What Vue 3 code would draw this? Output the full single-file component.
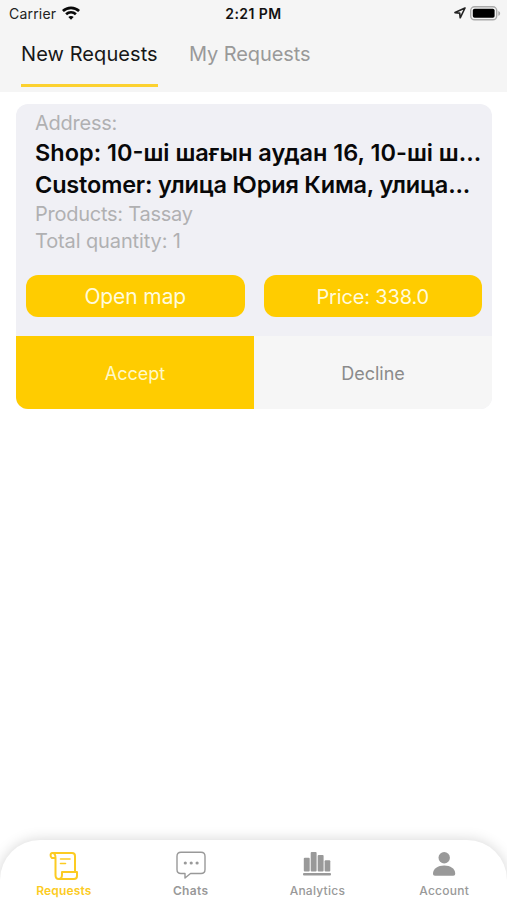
<script setup>
import { ref } from 'vue'

const activeTab = ref('new')
const activeNav = ref('requests')
</script>

<template>
  <div class="screen">
    <header class="top">
      <div class="status">
        <div class="carrier">
          <span>Carrier</span>
          <svg width="18" height="14" viewBox="0 0 18 14" fill="none" stroke="#080808" stroke-width="2.7">
            <path d="M.9 5C5.4.7 12.6.7 17.1 5" />
            <path d="M4.1 8.2c2.8-2.6 7-2.6 9.8 0" />
            <path d="M9 13.7 6.3 10.9c1.5-1.3 3.9-1.3 5.4 0Z" fill="#080808" stroke="none" />
          </svg>
        </div>
        <div class="time">2:21 PM</div>
        <div class="indicators">
          <svg width="12" height="12" viewBox="0 0 12 12" fill="none" stroke="#222" stroke-width="1.6" stroke-linejoin="round">
            <path d="M11 1 1 5.6l4.7.5.5 4.7Z" />
          </svg>
          <svg width="31" height="15" viewBox="0 0 31 15">
            <rect x=".7" y=".8" width="26" height="13" rx="3.8" fill="#f5f5f5" stroke="#aaa" stroke-width="1.4" />
            <rect x="2.8" y="2.8" width="21.8" height="9" rx="1.8" fill="#000" />
            <path d="M28.3 5v4.8c1.1-.4 1.8-1.3 1.8-2.4S29.4 5.4 28.3 5Z" fill="#aaa" />
          </svg>
        </div>
      </div>
      <nav class="tabs">
        <button class="tab tab-new" :class="{ active: activeTab === 'new' }" @click="activeTab = 'new'"><span>New Requests</span></button>
        <button class="tab tab-mine" :class="{ active: activeTab === 'mine' }" @click="activeTab = 'mine'"><span>My Requests</span></button>
      </nav>
    </header>

    <main>
      <article class="card">
        <div class="details">
          <p class="muted address">Address:</p>
          <p class="strong shop">Shop: 10-ші шағын аудан 16, 10-ші ш...</p>
          <p class="strong customer">Customer: улица Юрия Кима, улица...</p>
          <p class="muted">Products: Tassay</p>
          <p class="muted total">Total quantity: 1</p>
        </div>
        <div class="pills">
          <button class="pill map">Open map</button>
          <button class="pill price">Price: 338.0</button>
        </div>
        <div class="actions">
          <button class="accept">Accept</button>
          <button class="decline">Decline</button>
        </div>
      </article>
    </main>

    <nav class="bottom">
      <button class="item requests" :class="{ active: activeNav === 'requests' }" @click="activeNav = 'requests'">
        <svg width="30" height="30" viewBox="0 0 30 30" fill="none" stroke="currentColor" stroke-width="2" stroke-linejoin="round" stroke-linecap="round">
          <path d="M3.500 2H23c2 0 3 1 3 3v15" />
          <path d="M6.500 7H3c-2-1-2-5 .5-5s3 2 3 5v17c0 2.500 1 4 3.200 4s3.300-1.500 3.300-4v-3h15v4c0 2-1 3-3 3H9.500" />
          <path d="M11.500 8h9.500M11.500 12.500h5" stroke-width="1.600" />
        </svg>
        <span>Requests</span>
      </button>
      <button class="item" :class="{ active: activeNav === 'chats' }" @click="activeNav = 'chats'">
        <svg width="30" height="30" viewBox="0 0 30 30" fill="none" stroke="currentColor" stroke-width="1.400" stroke-linejoin="round">
          <path d="M5 1.200h20c2.500 0 4 1.500 4 4v13.300c0 2.500-1.500 4-4 4H14.500L9 27v-4.500H5c-2.500 0-4-1.500-4-4V5.200c0-2.500 1.500-4 4-4Z" />
          <g fill="currentColor" stroke="none"><circle cx="9.300" cy="12" r="1.600" /><circle cx="15.200" cy="12" r="1.600" /><circle cx="21.100" cy="12" r="1.600" /></g>
        </svg>
        <span>Chats</span>
      </button>
      <button class="item analytics" :class="{ active: activeNav === 'analytics' }" @click="activeNav = 'analytics'">
        <svg width="30" height="30" viewBox="0 0 30 30" fill="currentColor">
          <rect x="1.800" y="6.800" width="5.900" height="13.700" rx="1" />
          <rect x="8.700" y="1" width="5.900" height="19.500" rx="1" />
          <rect x="15.700" y="4" width="5.900" height="16.500" rx="1" />
          <rect x="22.600" y="9.200" width="5.700" height="11.300" rx="1" />
          <rect x="1" y="22" width="28" height="2.500" rx="1" />
        </svg>
        <span>Analytics</span>
      </button>
      <button class="item account" :class="{ active: activeNav === 'account' }" @click="activeNav = 'account'">
        <svg width="30" height="30" viewBox="0 0 30 30" fill="currentColor">
          <circle cx="15.200" cy="6.800" r="5.700" />
          <path d="M4 22.500c0-5 5-8 11.200-8s11 3 11 8c0 1.500-.7 2.200-2 2.200H6c-1.300 0-2-.7-2-2.200Z" />
        </svg>
        <span>Account</span>
      </button>
    </nav>
  </div>
</template>

<style>
body { background: #fff; }
</style>

<style scoped>
* { box-sizing: border-box; }
button { border: 0; padding: 0; background: none; font: inherit; color: inherit; }
p { margin: 0; }
.screen { width: 507px; height: 900px; display: flex; flex-direction: column; overflow: hidden; background: #fff; font-family: Inter, "Noto Sans", sans-serif; }
.top { height: 92px; background: #f5f5f5; }
.status { height: 28px; display: grid; grid-template-columns: 1fr auto 1fr; align-items: center; padding: 0 6px 1px 9px; font-size: 14px; color: #222; }
.carrier { display: flex; align-items: center; gap: 6px; letter-spacing: .2px; }
.carrier svg { margin-bottom: 2px; }
.time { font-weight: 600; letter-spacing: .45px; color: #111; margin-left: -3px; }
.indicators { display: flex; align-items: center; justify-content: flex-end; gap: 4px; margin-bottom: 1px; }
.tabs { display: flex; gap: 31px; padding-left: 21px; font-size: 20px; }
.tab { height: 59px; padding-top: 13px; display: flex; align-items: flex-start; border-bottom: 3px solid transparent; color: #999; line-height: 26px; white-space: nowrap; }
.tab-new { width: 137px; letter-spacing: .08px; }
.tab-mine { letter-spacing: -.08px; }
.tab.active { color: #171717; border-bottom-color: #fcd12f; }
main { flex: 1; padding: 12px 15px 0 16px; }
.card { height: 305px; display: flex; flex-direction: column; border-radius: 12px; overflow: hidden; background: #f0f0f5; }
.details { height: 171px; padding: 6px 0 0 19px; white-space: nowrap; }
.muted { font-size: 20px; line-height: 27px; letter-spacing: -.25px; color: #b0b0b2; }
.total { letter-spacing: -.12px; }
.strong { font-size: 23.5px; line-height: 32px; font-weight: 600; color: #080809; }
.strong.customer { letter-spacing: -.17px; }
.pills { height: 61px; display: flex; align-items: flex-start; gap: 19px; padding: 0 10px; }
.pill { flex: 1; height: 42px; border-radius: 12px; background: #fc0; color: #fffbdc; font-size: 21px; }
.pill.map { letter-spacing: -.1px; }
.pill.price { font-size: 20px; letter-spacing: -.15px; padding-top: 1px; }
.actions { flex: 1; display: flex; font-size: 18px; letter-spacing: -.15px; }
.actions button { flex: 1; padding-top: 1px; }
.accept { background: #fc0; color: #fff9c8; }
.decline { background: #f6f6f6; color: #8b8b8b; }
.bottom { height: 60px; display: flex; border-radius: 40px 40px 0 0; background: #fff; box-shadow: 0 0 14px rgba(0, 0, 0, .17); }
.item { flex: 1; padding: 11px 0 0 1px; display: flex; flex-direction: column; align-items: center; color: #999; font-size: 12px; font-weight: 600; letter-spacing: .3px; line-height: 18px; }
.item svg { flex: none; height: 30px; margin-bottom: 1px; }
.item.requests { letter-spacing: .15px; }
.item.active { color: #fccb22; }
.item.analytics, .item.account { font-weight: 500; letter-spacing: .25px; }
</style>
